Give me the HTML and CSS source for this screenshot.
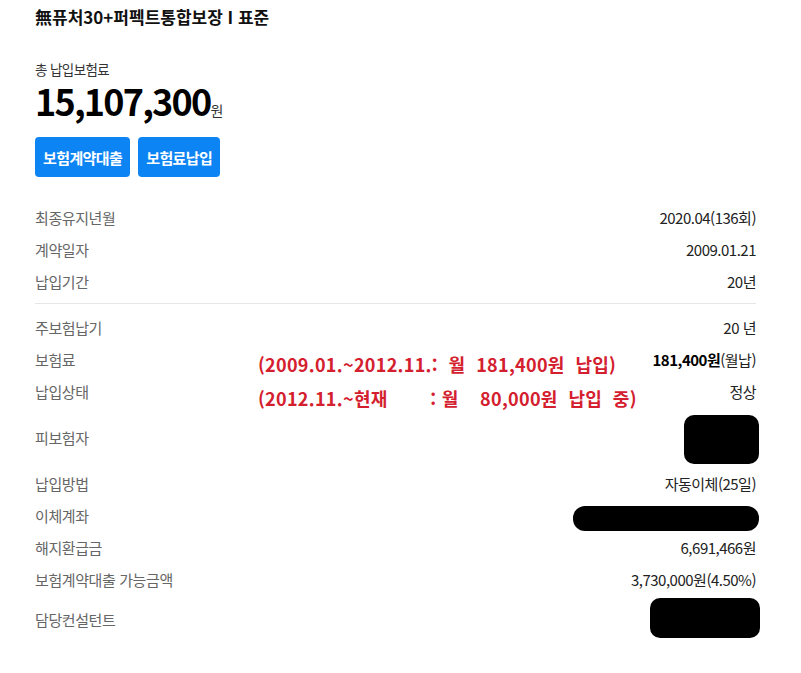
FILE: index.html
```html
<!DOCTYPE html>
<html lang="ko">
  <head>
    <meta charset="UTF-8" />
    <title>보험계약 상세</title>
    <link rel="stylesheet" href="styles.css">
  </head>
  <body>
    <div class="page">
      <h1 class="title">無퓨처30+퍼펙트통합보장 I 표준</h1>

      <div class="total">
        <div class="total-label">총 납입보험료</div>
        <div class="total-amount">15,107,300<span class="won">원</span></div>
      </div>

      <div class="actions">
        <button class="btn">보험계약대출</button>
        <button class="btn">보험료납입</button>
      </div>

      <!-- 계약 기본 -->
      <dl class="info">
        <div class="row"><dt>최종유지년월</dt><dd>2020.04(136회)</dd></div>
        <div class="row"><dt>계약일자</dt><dd>2009.01.21</dd></div>
        <div class="row"><dt>납입기간</dt><dd>20년</dd></div>
      </dl>

      <hr class="divider" />

      <!-- 계약 상세 -->
      <dl class="info detail">
        <div class="row"><dt>주보험납기</dt><dd>20 년</dd></div>
        <div class="row"><dt>보험료</dt><dd><b>181,400원</b>(월납)</dd></div>
        <div class="row"><dt>납입상태</dt><dd>정상</dd></div>
        <div class="row tall"><dt>피보험자</dt><dd><span class="mask mask-name"></span></dd></div>
        <div class="row"><dt>납입방법</dt><dd>자동이체(25일)</dd></div>
        <div class="row"><dt>이체계좌</dt><dd><span class="mask mask-account"></span></dd></div>
        <div class="row"><dt>해지환급금</dt><dd>6,691,466원</dd></div>
        <div class="row"><dt>보험계약대출 가능금액</dt><dd>3,730,000원(4.50%)</dd></div>
        <div class="row mid"><dt>담당컨설턴트</dt><dd><span class="mask mask-agent"></span></dd></div>

        <div class="note">(2009.01.~2012.11.:  월  181,400원  납입)
(2012.11.~현재        : 월    80,000원  납입  중)</div>
      </dl>
    </div>
  </body>
</html>
```

FILE: styles.css
```css
body {
  margin: 0;
  background: #fff;
  font-family: "Noto Sans CJK KR", "Noto Sans", sans-serif;
  color: #222;
}
.page {
  width: 721px;
  padding: 5px 0 30px 35px;
}
.title {
  margin: 0;
  font-size: 17px;
  line-height: 24px;
  font-weight: bold;
  letter-spacing: 0;
  color: #111;
}
.total {
  margin-top: 31px;
}
.total-label {
  font-size: 13.5px;
  line-height: 18px;
  letter-spacing: -0.6px;
  color: #333;
}
.total-amount {
  display: flex;
  align-items: baseline;
  margin-top: 2px;
  height: 40px;
  font-size: 36px;
  line-height: 40px;
  font-weight: bold;
  letter-spacing: -1.8px;
  color: #000;
}
.total-amount .won {
  font-size: 14px;
  line-height: 1;
  font-weight: normal;
  letter-spacing: 0;
  margin-left: 0;
  color: #333;
}
.actions {
  display: flex;
  gap: 8px;
  margin-top: 17px;
}
.btn {
  height: 40px;
  padding: 0 8px;
  border: none;
  border-radius: 4px;
  background-color: #0d84f4;
  color: #fff;
  font-family: inherit;
  font-size: 15px;
  font-weight: bold;
  letter-spacing: -0.6px;
}
.info {
  margin: 24px 0 0 0;
}
.info.detail {
  position: relative;
  margin-top: 7px;
}
.row {
  display: flex;
  justify-content: space-between;
  align-items: center;
  height: 32px;
}
.row.tall {
  height: 60px;
}
.row.mid {
  height: 48px;
}
dt {
  font-size: 15px;
  color: #666;
  letter-spacing: -0.4px;
}
dd {
  margin: 0;
  font-size: 15px;
  color: #222;
  letter-spacing: -0.5px;
}
dd b {
  color: #000;
}
.divider {
  margin: 6px 0 0 0;
  border: none;
  border-top: 1px solid #e6e6e6;
}
.mask {
  display: block;
  background: #000;
}
.mask-name {
  width: 75px;
  height: 49px;
  border-radius: 10px;
  margin-right: -3px;
  margin-top: 4px;
}
.mask-account {
  width: 186px;
  height: 25px;
  border-radius: 12px;
  margin-right: -3px;
  margin-top: 6px;
}
.mask-agent {
  width: 110px;
  height: 40px;
  border-radius: 10px;
  margin-right: -4px;
  margin-top: -2px;
}
.note {
  position: absolute;
  left: 223px;
  top: 36px;
  white-space: pre;
  font-size: 18px;
  line-height: 34px;
  font-weight: bold;
  color: #d4202e;
  letter-spacing: 0.3px;
}
```
